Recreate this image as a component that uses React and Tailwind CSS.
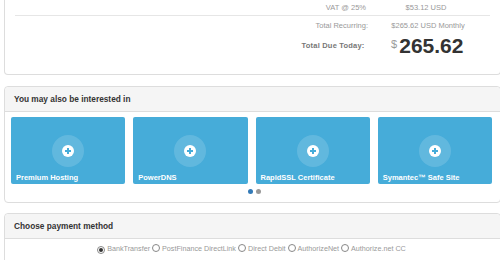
import React from 'react';

const products = ['Premium Hosting', 'PowerDNS', 'RapidSSL Certificate', 'Symantec™ Safe Site'];
const gateways = ['BankTransfer', 'PostFinance DirectLink', 'Direct Debit', 'AuthorizeNet', 'Authorize.net CC'];

const PlusIcon = () => (
  <svg width="12" height="12" viewBox="0 0 12 12">
    <circle cx="6" cy="6" r="6" fill="#ffffff" />
    <path d="M6 3v6M3 6h6" stroke="#46acd9" strokeWidth="2" />
  </svg>
);

const Radio = ({ checked }) => (
  <span className="inline-flex items-center justify-center w-[8px] h-[8px] rounded-full border border-[#888] bg-white mr-[2px] align-[-1px]">
    {checked && <span className="w-[4px] h-[4px] rounded-full bg-[#333]"></span>}
  </span>
);

const App = () => {
  return (
    <div className="w-[500px] h-[260px] overflow-hidden bg-white" style={{ fontFamily: '"Liberation Sans", Arial, sans-serif' }}>
      <div className="ml-[4px] w-[497px]">
        {/* order totals */}
        <div className="border-x border-b border-[#dddddd] rounded-b-[4px] h-[75px] px-[10px]">
          <div className="flex h-[16px] items-center border-b border-[#e6e6e6] text-[7.5px] text-[#999]">
            <div className="w-[351px] text-right">VAT @ 25%</div>
            <div className="w-[120px] text-center">$53.12 USD</div>
          </div>
          <div className="flex h-[19px] items-center text-[7.5px] text-[#999]">
            <div className="w-[353px] text-right">Total Recurring:</div>
            <div className="w-[120px] text-center">$265.62 USD Monthly</div>
          </div>
          <div className="flex h-[21px] items-center">
            <div className="w-[351px] text-right text-[7.5px] font-bold text-[#777] tracking-[0.2px]">Total Due Today:</div>
            <div className="w-[126px] flex justify-center items-start">
              <span className="text-[11px] text-[#999] mt-[1px] mr-[2px]">$</span>
              <span className="text-[21px] leading-[22px] font-bold text-[#333]">265.62</span>
            </div>
          </div>
        </div>

        {/* promotions */}
        <div className="mt-[11px] border border-[#dddddd] rounded-[4px]">
          <div className="h-[25px] flex items-center px-[9px] bg-[#f5f5f5] border-b border-[#dddddd] rounded-t-[4px] text-[8.3px] font-bold text-[#333]">
            You may also be interested in
          </div>
          <div className="pt-[5px] pl-[6px] pr-[8px] pb-[8px]">
            <div className="grid grid-cols-4 gap-[8px]">
              {products.map((name) => (
                <div key={name} className="h-[67px] bg-[#46acd9] rounded-[2px] flex flex-col items-center pt-[18px]">
                  <div className="w-[32px] h-[32px] rounded-full bg-white/15 flex items-center justify-center">
                    <PlusIcon />
                  </div>
                  <div className="self-start pl-[5px] mt-[5px] text-[7.5px] font-bold text-white">{name}</div>
                </div>
              ))}
            </div>
            <div className="flex justify-center gap-[3px] mt-[5px] pl-[6px]">
              <span className="w-[5px] h-[5px] rounded-full bg-[#337ab7]"></span>
              <span className="w-[5px] h-[5px] rounded-full bg-[#999]"></span>
            </div>
          </div>
        </div>

        {/* payment method */}
        <div className="mt-[10px] border border-[#dddddd] rounded-[4px] h-[60px]">
          <div className="h-[25px] flex items-center px-[9px] bg-[#f5f5f5] border-b border-[#dddddd] rounded-t-[4px] text-[8.3px] font-bold text-[#333]">
            Choose payment method
          </div>
          <div className="pt-[5px] text-center text-[7.2px] text-[#999] pr-[2px]">
            {gateways.map((g, i) => (
              <React.Fragment key={g}>
                <label>
                  <Radio checked={i === 0} />
                  {g}
                </label>{' '}
              </React.Fragment>
            ))}
          </div>
        </div>
      </div>
    </div>
  );
};

export default App;
